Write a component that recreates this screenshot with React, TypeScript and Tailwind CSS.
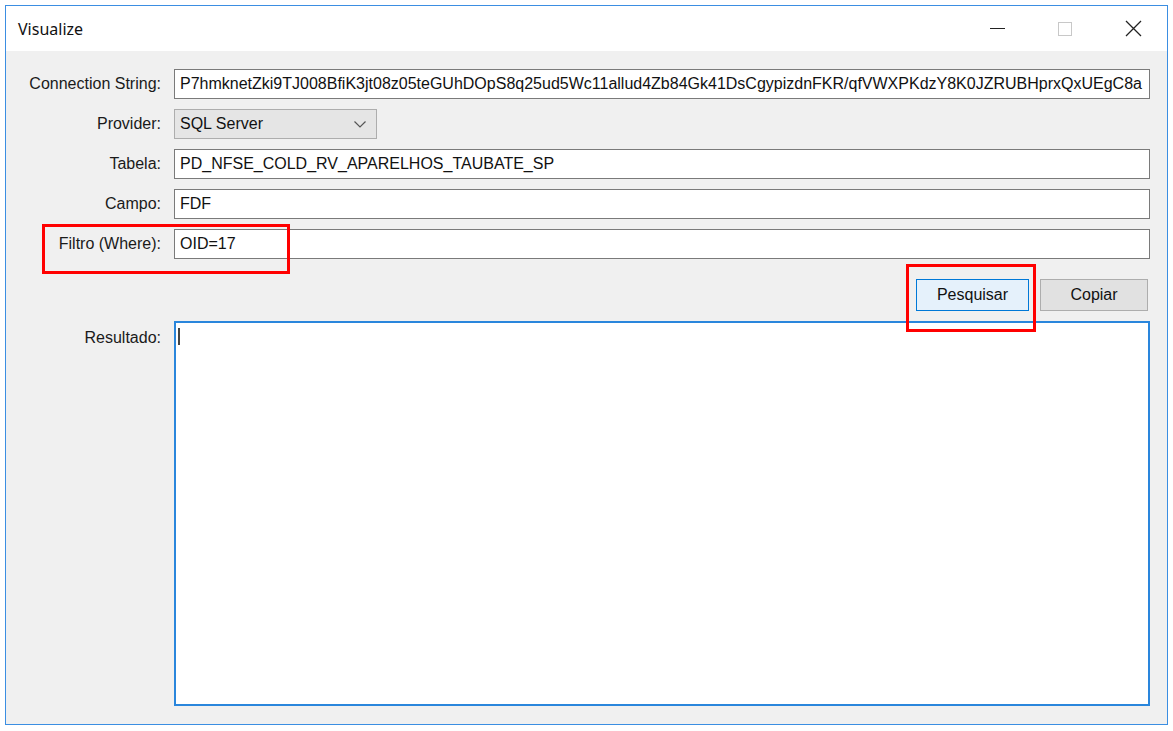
export default function App() {
  const font = { fontFamily: '"Liberation Sans", Arial, sans-serif' };
  const conn =
    'P7hmknetZki9TJ008BfiK3jt08z05teGUhDOpS8q25ud5Wc11allud4Zb84Gk41DsCgypizdnFKR/qfVWXPKdzY8K0JZRUBHprxQxUEgC8a';

  const label = 'text-right text-[16px] text-[#1a1a1a] leading-none';
  const box =
    'h-[30px] bg-white border border-[#7a7a7a] px-[5px] flex items-center text-[16px] text-[#111] whitespace-nowrap overflow-hidden';

  return (
    <div className="w-[1173px] h-[731px] bg-white relative overflow-hidden" style={font}>
      <div className="ml-[5px] mt-[5px] w-[1163px] h-[720px] border border-[#3b8ee2] flex flex-col">
        {/* title bar */}
        <div className="h-[45px] bg-white flex items-center">
          <div className="pl-[12px] text-[16px] text-[#111] flex-1" style={{ fontFamily: '"Noto Sans", sans-serif' }}>
            Visualize
          </div>
          <div className="flex items-center h-full">
            <div className="w-[68px] h-full flex items-center justify-center">
              <div className="w-[15px] h-[1px] bg-[#222]" />
            </div>
            <div className="w-[68px] h-full flex items-center justify-center">
              <div className="w-[14px] h-[14px] border border-[#c8c8c8]" />
            </div>
            <div className="w-[68px] h-full flex items-center justify-center">
              <svg width="17" height="17" viewBox="0 0 17 17" fill="none" stroke="#222" strokeWidth="1.3">
                <path d="M1 1L16 16M16 1L1 16" />
              </svg>
            </div>
          </div>
        </div>

        {/* client area */}
        <div className="flex-1 bg-[#f0f0f0] pt-[18px] pr-[17px] flex flex-col">
          <div className="grid grid-cols-[155px_1fr] gap-x-[13px] gap-y-[10px] items-center">
            <div className={label}>Connection String:</div>
            <div className={box}>{conn}</div>

            <div className={label}>Provider:</div>
            <div className="h-[30px] w-[203px] bg-[#e5e5e5] border border-[#adadad] flex items-center justify-between pl-[5px] pr-[10px] text-[16px] text-[#111]">
              <span>SQL Server</span>
              <svg width="12" height="7" viewBox="0 0 12 7" fill="none" stroke="#555" strokeWidth="1.2">
                <path d="M0.5 0.5L6 6L11.5 0.5" />
              </svg>
            </div>

            <div className={label}>Tabela:</div>
            <div className={box}>PD_NFSE_COLD_RV_APARELHOS_TAUBATE_SP</div>

            <div className={label}>Campo:</div>
            <div className={box}>FDF</div>

            <div className={label}>Filtro (Where):</div>
            <div className={box}>OID=17</div>
          </div>

          <div className="flex justify-end gap-[11px] mt-[20px] pr-[2px]">
            <div className="w-[113px] h-[32px] bg-[#e5f1fb] border border-[#0078d7] flex items-center justify-center text-[16px] text-[#111]">
              Pesquisar
            </div>
            <div className="w-[108px] h-[32px] bg-[#e1e1e1] border border-[#adadad] flex items-center justify-center text-[16px] text-[#111]">
              Copiar
            </div>
          </div>

          <div className="grid grid-cols-[155px_1fr] gap-x-[13px] mt-[10px]">
            <div className={label + ' pt-[9px]'}>Resultado:</div>
            <div className="h-[385px] bg-white border-2 border-[#2a86dc] pl-[2px] pt-[5px]">
              <div className="w-[2px] h-[17px] bg-[#444]" />
            </div>
          </div>
        </div>
      </div>

      {/* annotation boxes */}
      <div className="absolute left-[42px] top-[224px] w-[248px] h-[50px] border-[3px] border-[#ff0000]" />
      <div className="absolute left-[906px] top-[264px] w-[130px] h-[68px] border-[3px] border-[#ff0000]" />
    </div>
  );
}
